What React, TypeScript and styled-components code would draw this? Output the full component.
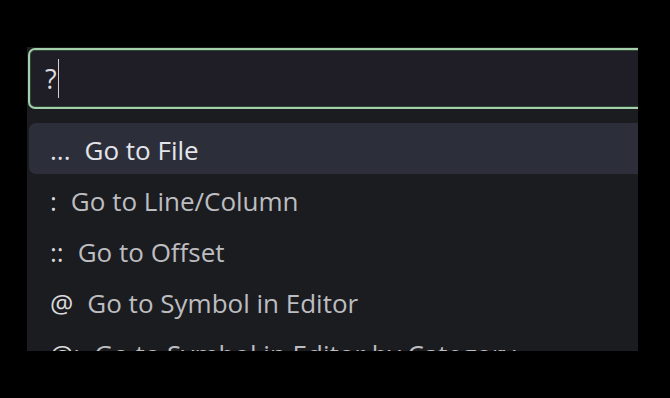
import React from "react";
import styled, { createGlobalStyle } from "styled-components";

const Global = createGlobalStyle`
  html, body {
    margin: 0;
    padding: 0;
    background: #000;
    width: 670px;
    height: 398px;
    overflow: hidden;
  }
  * { box-sizing: border-box; }
`;

const Stage = styled.div`
  width: 670px;
  height: 398px;
  padding: 47px 32px 0 27px;
  background: #000;
  font-family: "Open Sans", "Noto Sans", sans-serif;
`;

const Panel = styled.div`
  width: 611px;
  height: 304px;
  background: #1b1c20;
  overflow: hidden;
  padding: 1px 0 0 1px;
`;

const Inner = styled.div`
  width: 630px;
  display: flex;
  flex-direction: column;
`;

const InputBox = styled.div`
  height: 61px;
  border: 2px solid #a3cfab;
  box-shadow: inset 0 0 0 1px #2d4734;
  border-radius: 7px;
  background: #1f1e27;
  display: flex;
  align-items: center;
  padding-left: 15px;
  color: #dcdce0;
  font-size: 27px;
`;

const Caret = styled.span`
  display: inline-block;
  width: 1.5px;
  height: 39px;
  margin-left: 1px;
  background: #d0d0d0;
`;

const List = styled.div`
  margin-top: 14px;
  display: flex;
  flex-direction: column;
`;

const Row = styled.div<{ $active?: boolean }>`
  height: 51px;
  flex: none;
  display: flex;
  align-items: center;
  gap: 14px;
  padding: 3px 0 0 21px;
  border-radius: 7px;
  margin-left: 1px;
  background: ${(p) => (p.$active ? "#2c2f3a" : "transparent")};
  font-size: 26px;
  white-space: nowrap;
`;

const Prefix = styled.span<{ $active?: boolean }>`
  color: ${(p) => (p.$active ? "#e2e3e8" : "#dadadc")};
`;

const Label = styled.span<{ $active?: boolean }>`
  color: ${(p) => (p.$active ? "#e4e5ea" : "#bdbdc0")};
`;

const items = [
  { prefix: "...", label: "Go to File" },
  { prefix: ":", label: "Go to Line/Column" },
  { prefix: "::", label: "Go to Offset" },
  { prefix: "@", label: "Go to Symbol in Editor" },
  { prefix: "@:", label: "Go to Symbol in Editor by Category" },
];

export default function App() {
  return (
    <>
      <Global />
      <Stage>
        <Panel>
          <Inner>
            <InputBox>
              ?<Caret />
            </InputBox>
            <List>
              {items.map((it, i) => (
                <Row key={it.label} $active={i === 0}>
                  <Prefix $active={i === 0}>{it.prefix}</Prefix>
                  <Label $active={i === 0}>{it.label}</Label>
                </Row>
              ))}
            </List>
          </Inner>
        </Panel>
      </Stage>
    </>
  );
}
